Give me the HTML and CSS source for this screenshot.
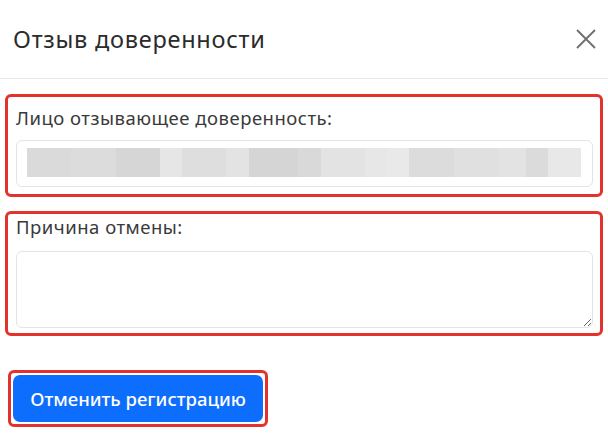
FILE: index.html
```html
<!DOCTYPE html>
<html lang="ru">
<head>
<meta charset="utf-8">
<link rel="stylesheet" href="styles.css">
</head>
<body>
<div class="modal">
  <div class="modal-header">
    <h5 class="modal-title">Отзыв доверенности</h5>
    <button class="close" aria-label="Закрыть">
      <svg width="22" height="22" viewBox="0 0 22 22"><path d="M2 2 L20 20 M20 2 L2 20" stroke="#707070" stroke-width="1.9" fill="none"/></svg>
    </button>
  </div>
  <div class="modal-body">
    <div class="hl field field-1">
      <label class="label">Лицо отзывающее доверенность:</label>
      <div class="input">
        <div class="blur">
          <span style="width:8%;background:#dadada"></span><span style="width:8%;background:#dcdcdc"></span><span style="width:8%;background:#d6d6d6"></span><span style="width:4%;background:#e6e6e6"></span><span style="width:8%;background:#dedede"></span><span style="width:4%;background:#e3e3e3"></span><span style="width:9%;background:#d5d5d5"></span><span style="width:4%;background:#d9d9d9"></span><span style="width:8%;background:#e3e3e3"></span><span style="width:4%;background:#e7e7e7"></span><span style="width:4%;background:#e9e9e9"></span><span style="width:8%;background:#dcdcdc"></span><span style="width:8%;background:#e0e0e0"></span><span style="width:5%;background:#e3e3e3"></span><span style="width:4%;background:#dbdbdb"></span><span style="width:6%;background:#e8e8e8"></span>
        </div>
      </div>
    </div>
    <div class="hl field field-2">
      <label class="label">Причина отмены:</label>
      <textarea class="textarea"></textarea>
    </div>
    <div class="footer">
      <div class="hl btn-wrap">
        <button class="btn">Отменить регистрацию</button>
      </div>
    </div>
  </div>
</div>
</body>
</html>
```

FILE: styles.css
```css
* { box-sizing: border-box; }
html, body { margin: 0; padding: 0; background: #fff; }
body { font-family: "Noto Sans", "Segoe UI", sans-serif; color: #212529; width: 608px; height: 438px; overflow: hidden; }

.modal-header {
  height: 79px;
  border-bottom: 1px solid #e3e6ea;
  display: flex;
  align-items: center;
  justify-content: space-between;
  padding: 0 11px 0 13px;
}
.modal-title {
  margin: 0;
  font-size: 23.5px;
  font-weight: 400;
  letter-spacing: 0.75px;
  color: #2b2b2b;
  line-height: 1;
  position: relative;
  top: 1px;
}
.close {
  border: 0;
  background: transparent;
  padding: 0;
  width: 22px;
  height: 22px;
  display: flex;
}

.modal-body {
  padding: 15px 5px 0 5px;
  display: flex;
  flex-direction: column;
}
.hl {
  border: 3px solid #e2322b;
  border-radius: 6px;
}
.field {
  padding: 0 7px 0 8px;
  display: flex;
  flex-direction: column;
}
.field-1 { height: 103px; padding-top: 9px; }
.field-2 { height: 125px; margin-top: 14px; padding-top: 1px; }
.label {
  font-size: 18.5px;
  letter-spacing: 0.5px;
  color: #3a3a3a;
  line-height: 24px;
  height: 24px;
}
.field-1 .label { margin-bottom: 10px; }
.field-2 .label { margin-bottom: 12px; }
.input {
  height: 47px;
  border: 1px solid #e1e4e8;
  border-radius: 6px;
  padding: 7px 11px 9px 10px;
}
.blur {
  display: flex;
  height: 100%;
  filter: blur(0.6px);
}
.blur span { display: block; height: 100%; }
.textarea {
  height: 77px;
  border: 1px solid #e1e4e8;
  border-radius: 6px;
  resize: vertical;
  font-family: inherit;
  width: 100%;
}
.footer {
  margin-top: 34px;
  padding-left: 3px;
}
.btn-wrap {
  display: inline-flex;
  padding: 2px;
}
.btn {
  width: 250px;
  height: 47px;
  background: #0d6efd;
  border: 0;
  border-radius: 7px;
  color: #fff;
  font-family: "Noto Sans", sans-serif;
  font-size: 18.5px;
  font-weight: 500;
  letter-spacing: 0;
}
```
